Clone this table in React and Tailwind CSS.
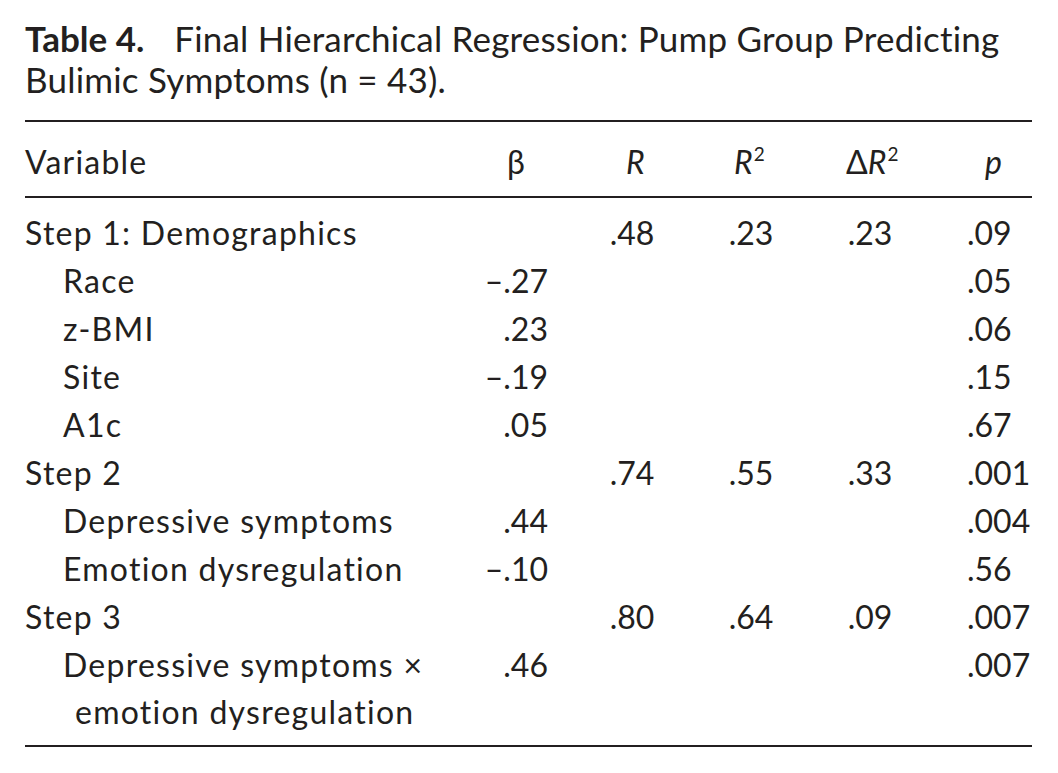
import React from 'react';

const rows = [
    { label: 'Step 1: Demographics', step: true, r: '.48', r2: '.23', dr2: '.23', p: '.09' },
    { label: 'Race', beta: '–.27', p: '.05' },
    { label: 'z-BMI', beta: '.23', p: '.06' },
    { label: 'Site', beta: '–.19', p: '.15' },
    { label: 'A1c', beta: '.05', p: '.67' },
    { label: 'Step 2', step: true, r: '.74', r2: '.55', dr2: '.33', p: '.001' },
    { label: 'Depressive symptoms', beta: '.44', p: '.004' },
    { label: 'Emotion dysregulation', beta: '–.10', p: '.56' },
    { label: 'Step 3', step: true, r: '.80', r2: '.64', dr2: '.09', p: '.007' },
];

const grid = 'grid grid-cols-[435px_88px_168px_70px_168px_78px]';

const Rule = () => <div className="h-[2px] w-[1007px] bg-[#231f20]" />;

const Sup = () => <span className="relative -top-[13px] text-[19px] leading-none ml-[1px]">2</span>;

const App = () => {
    return (
        <div className="min-h-screen bg-white text-[#231f20] font-['Lato','Open_Sans',sans-serif]">
            <div className="pl-[25px] pt-[18px]">
                {/* caption */}
                <p className="text-[35px] leading-[41px] whitespace-nowrap">
                    <span className="font-bold">Table 4.</span>
                    <span className="ml-[30px] tracking-[0.2px]">Final Hierarchical Regression: Pump Group Predicting</span>
                    <br />
                    <span className="tracking-[0.2px]">Bulimic Symptoms (n = 43).</span>
                </p>

                <div className="mt-[20px]">
                    <Rule />
                </div>

                {/* header */}
                <div className={`${grid} text-[32px] leading-[48px] mt-[15.6px] mb-[10.4px] whitespace-nowrap`}>
                    <div className="tracking-[1.2px]">Variable</div>
                    <div className="pl-[47px]">β</div>
                    <div className="pl-[78px] italic">R</div>
                    <div className="pl-[18px]">
                        <span className="italic">R</span>
                        <Sup />
                    </div>
                    <div className="pl-[60px]">
                        Δ<span className="italic">R</span>
                        <Sup />
                    </div>
                    <div className="pl-[31px] italic">p</div>
                </div>

                <Rule />

                {/* body */}
                <div className="text-[32px] leading-[48px] whitespace-nowrap pt-[10.6px] pb-[10.4px]">
                    {rows.map((row) => (
                        <div key={row.label} className={grid}>
                            <div className={row.step ? 'tracking-[1.25px]' : 'pl-[38px] tracking-[1.25px]'}>{row.label}</div>
                            <div className="text-right">{row.beta}</div>
                            <div className="text-center">{row.r}</div>
                            <div className="text-center">{row.r2}</div>
                            <div className="text-center">{row.dr2}</div>
                            <div className="pl-[13px]">{row.p}</div>
                        </div>
                    ))}
                    <div className={`${grid} leading-[47px]`}>
                        <div className="pl-[38px] tracking-[1.25px]">
                            Depressive symptoms ×
                            <br />
                            <span className="pl-[12px]">emotion dysregulation</span>
                        </div>
                        <div className="text-right">.46</div>
                        <div />
                        <div />
                        <div />
                        <div className="pl-[13px]">.007</div>
                    </div>
                </div>

                <Rule />
            </div>
        </div>
    );
};

export default App;
